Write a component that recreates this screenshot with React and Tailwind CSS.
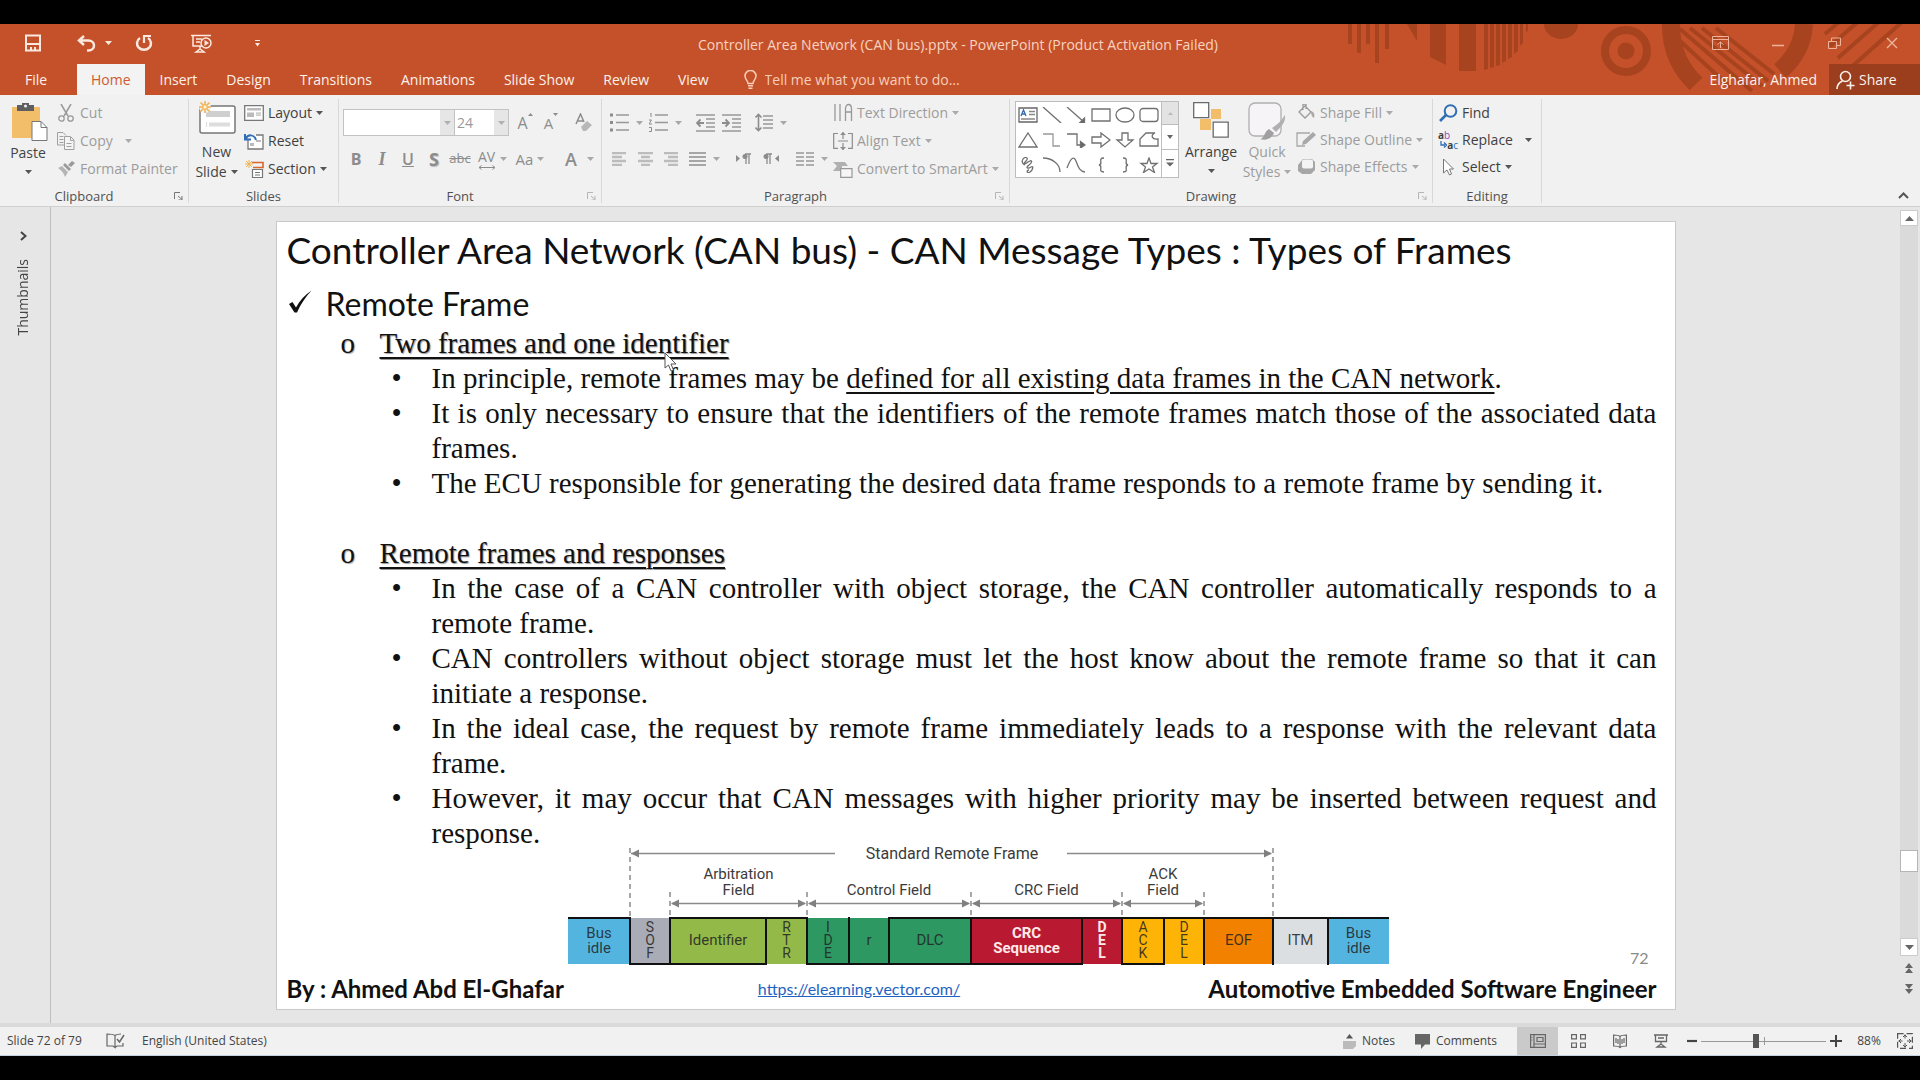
import React from "react";

const Svg = ({ w, h, children, className = "" }) => (
  <svg width={w} height={h} viewBox={`0 0 ${w} ${h}`} fill="none" className={`shrink-0 ${className}`} aria-hidden="true">
    {children}
  </svg>
);

const Caret = ({ className = "text-[#666666]" }) => (
  <Svg w={7} h={4} className={className}>
    <path d="M0 0h7L3.5 4z" fill="currentColor" />
  </Svg>
);

const Divider = () => <span className="h-6 w-px shrink-0 bg-[#d2d2d2]" />;

/* ---------- title bar ---------- */

const HeaderPattern = () => (
  <svg className="pointer-events-none absolute top-0 right-0" width="580" height="71" viewBox="0 0 580 71" fill="none" aria-hidden="true">
    <g fill="#a8431f">
      <path d="M8 0h4v20H8zM17 0h4v29h-4zM26 0h4v20h-4zM35 0h4v39h-4zM45 0h4v25h-4z" />
      <path d="M67 0h10v17zM90 0h16v41l-16-8zM119 0h17v47h-17z" />
      <path d="M144 0h4v45l-4 1zM150 0h4v43l-4 1zM156 0h4v41l-4 1zM162 0h4v37l-4 2zM168 0h4v33l-4 2zM174 0h4v27l-4 3zM180 0h3v19l-3 3zM186 0h2v6l-2 3z" />
      <path d="M204 0h34a17 15 0 0 1-34 0z" />
      <circle cx="286" cy="27" r="8.500" />
    </g>
    <circle cx="286" cy="27" r="21" stroke="#a8431f" strokeWidth="8" />
    <path d="M331 0c0 28 10 45 25 60M464 0c-1 19-9 34-24 47" stroke="#a8431f" strokeWidth="18" />
    <g stroke="#a8431f" strokeWidth="4">
      <path d="M340 5l72 62M350 4l72 58M362 4l66 53M376 4l58 46M340 17l50 46" />
      <path d="M485 10l14-12M490 22l29-25M498 34l42-37M508 46l54-48" />
    </g>
  </svg>
);

const QuickAccess = () => (
  <div className="flex items-center pb-0.5 text-[#fbe9e0]">
    <button aria-label="Save" className="ml-[25px]">
      <Svg w={16} h={18}>
        <path d="M1 1.500h14v15H1z" stroke="currentColor" strokeWidth="2" />
        <path d="M1 9h14v2H1zM5 13h2v3H5zM9 13h2v3H9z" fill="currentColor" />
      </Svg>
    </button>
    <button aria-label="Undo" className="ml-9">
      <Svg w={19} h={17}>
        <path d="M7 1L2 5.500 7 10M2 5.500h9.500c3 0 5.500 2 5.500 5s-2.500 5-5.500 5H10" stroke="currentColor" strokeWidth="2.500" />
      </Svg>
    </button>
    <button aria-label="Undo history" className="ml-[9px]"><Caret className="text-[#fbe9e0]" /></button>
    <button aria-label="Repeat" className="ml-[23px]">
      <Svg w={18} h={18}>
        <path d="M5 4a7 6.500 0 1 0 8 0" stroke="currentColor" strokeWidth="2.500" />
        <path d="M9 9V2h7" stroke="currentColor" strokeWidth="2.200" />
      </Svg>
    </button>
    <button aria-label="Start from beginning" className="ml-[38px]">
      <Svg w={22} h={19}>
        <path d="M0 1.500h20M2 2v10h9M5 5h6M5 8h4M9 12v4M5 18l4-3 4 3z" stroke="currentColor" strokeWidth="1.500" />
        <circle cx="15" cy="9" r="5" stroke="currentColor" strokeWidth="1.500" />
        <path d="M13.500 6l4.500 3-4.500 3z" fill="currentColor" />
      </Svg>
    </button>
    <button aria-label="Customize toolbar" className="ml-[42px]">
      <Svg w={5} h={7}>
        <path d="M0 0h5v1H0zM0 3h5L2.500 6.500z" fill="currentColor" />
      </Svg>
    </button>
  </div>
);

const WindowControls = () => (
  <div className="flex items-center pb-0.5 text-[#eeb49b]">
    <button aria-label="Ribbon display options" className="flex w-[57px] justify-center">
      <Svg w={17} h={14}>
        <path d="M.5.500h16v13H.5zM.5 3.500h16M8.500 12V6M5.500 8.500l3-2.500 3 2.500" stroke="currentColor" />
      </Svg>
    </button>
    <button aria-label="Minimize" className="flex w-[57px] justify-center">
      <Svg w={12} h={14}><path d="M0 9.500h12" stroke="currentColor" strokeWidth="1.500" /></Svg>
    </button>
    <button aria-label="Restore" className="flex w-[57px] justify-center">
      <Svg w={13} h={13}><path d="M.5 4.500h8v7h-8zM3.500 4V1h9v7.500H9" stroke="currentColor" /></Svg>
    </button>
    <button aria-label="Close" className="flex w-[57px] justify-center">
      <Svg w={12} h={12}><path d="M1 1l10 10M11 1L1 11" stroke="currentColor" strokeWidth="1.400" /></Svg>
    </button>
  </div>
);

const TABS = ["Home", "Insert", "Design", "Transitions", "Animations", "Slide Show", "Review", "View"];

const Header = () => (
  <header className="relative bg-[#c4512a] text-sm text-[#fdf1eb]">
    <HeaderPattern />
    <div className="relative grid h-10 grid-cols-[1fr_auto_1fr] items-center">
      <QuickAccess />
      <h1 className="pt-0.5 pr-1 text-[#f8d3c2]">Controller Area Network (CAN bus).pptx - PowerPoint (Product Activation Failed)</h1>
      <div className="flex justify-end"><WindowControls /></div>
    </div>
    <div className="relative flex h-[31px] items-stretch gap-px">
      <button className="w-[76px] pr-2 pl-1 text-center">File</button>
      {TABS.map((t, i) => (
        <button key={t} className={i === 0 ? "bg-[#f3f3f3] px-3.5 text-[#cf5a33]" : "px-3.5"}>{t}</button>
      ))}
      <label className="ml-5 flex grow items-center gap-2 text-[#f8cdb9]">
        <Svg w={13} h={19}>
          <path d="M4 13.500c0-3-3-4-3-7.500a5.500 5.500 0 0 1 11 0c0 3.500-3 4.500-3 7.500z" stroke="currentColor" strokeWidth="1.500" />
          <path d="M4 15h5v1.500H4zM4.500 17.500h4V19h-4z" fill="currentColor" />
        </Svg>
        <input aria-label="Tell me" placeholder="Tell me what you want to do..." className="w-[260px] bg-transparent placeholder:text-[#f8cdb9] placeholder:opacity-100" />
      </label>
      <button className="px-[11px]">Elghafar, Ahmed</button>
      <button className="flex w-[91px] items-center gap-1 bg-[#9a3e1e] pl-[7px]">
        <Svg w={19} h={20}>
          <circle cx="9.500" cy="6.500" r="5" stroke="currentColor" strokeWidth="1.600" />
          <path d="M1 19c0-4 2-6.500 5.500-8M14.500 11.500v8M10.500 15.500h8" stroke="currentColor" strokeWidth="1.600" />
        </Svg>
        Share
      </button>
    </div>
  </header>
);

/* ---------- ribbon ---------- */

const Group = ({ label, launcher, className, children }) => (
  <section aria-label={label} className={`flex shrink-0 flex-col ${className}`}>
    <div className="flex h-[84px]">{children}</div>
    <div className="flex h-5 items-center pt-1.5">
      <span className="grow text-center text-[13px] leading-4 text-[#505050]">{label}</span>
      {launcher && (
        <button aria-label={`${label} settings`} className="flex w-5 items-center justify-center">
          <Svg w={9} h={8} className={launcher}>
            <path d="M.5 7V.5H6" stroke="currentColor" />
            <path d="M4 4l4 3.500M8 4v4H4.500" stroke="currentColor" />
          </Svg>
        </button>
      )}
    </div>
  </section>
);

const GroupEdge = () => <span className="w-px shrink-0 bg-[#d8d8d8]" />;

const Cmd = ({ icon, label, caret, off, wide, tight }) => (
  <button className={`flex items-center gap-1 text-sm whitespace-nowrap ${tight ? "h-[27px]" : "h-7"} ${off ? "text-[#9c9c9c]" : "text-[#3f3f3f]"}`}>
    <span className="flex w-5 justify-center">{icon}</span>
    {label}
    {caret && <Caret className={`${wide ? "ml-2" : "ml-0"} ${off ? "text-[#aaaaaa]" : "text-[#555555]"}`} />}
  </button>
);

const ClipboardGroup = () => (
  <Group label="Clipboard" launcher="text-[#777777]" className="w-[188px]">
    <button className="ml-1.5 flex w-[44px] flex-col items-center pt-1 text-sm leading-5 text-[#444444]">
      <Svg w={36} h={38} className="ml-1">
        <path d="M0 4h28v31H0z" fill="#f2be6a" />
        <path d="M5 2h5V0h7v2h5v6H5z" fill="#5f5f5f" />
        <circle cx="13.500" cy="3" r="1.500" fill="#f1f1f1" />
        <path d="M20 18.500h9l6 6v13H20z" fill="#fff" stroke="#777" />
        <path d="M29 18.500v6h6" stroke="#777" />
      </Svg>
      <span className="pt-0.5">Paste</span>
      <Caret className="mt-[7px] text-[#555555]" />
    </button>
    <div className="ml-1.5 flex flex-col items-start">
      <Cmd off label="Cut" icon={<Svg w={16} h={18}><path d="M3 0l7 12M13 0L6 12" stroke="#999" strokeWidth="1.500" /><circle cx="3.500" cy="14.500" r="2.700" stroke="#999" strokeWidth="1.300" /><circle cx="12.500" cy="14.500" r="2.700" stroke="#999" strokeWidth="1.300" /></Svg>} />
      <Cmd off caret wide label="Copy" icon={<Svg w={18} h={18}><path d="M7 13H.5V.500H6l3 3M2.500 4.500h4M2.500 7.500h4M2.500 10.500h4" stroke="#a0a0a0" /><path d="M7.500 4.500h6l3.500 3.500v9.500H7.500zM13.500 5v3.500h3M9.500 11.500h5M9.500 14.500h5" stroke="#a0a0a0" fill="#f4f4f4" /></Svg>} />
      <Cmd off label="Format Painter" icon={<Svg w={17} h={16}><path d="M0 7l4-2 6 6-3 5c-1-4-4-7-7-9z" fill="#b4b4b4" /><path d="M5 4l2-2 6 6-2 2zM10 4l4-4 3 2-4 4z" fill="#9a9a9a" /></Svg>} />
    </div>
  </Group>
);

const SlidesGroup = () => (
  <Group label="Slides" className="w-[149px]">
    <button className="ml-[5px] flex w-[45px] flex-col items-center pt-0.5 text-sm leading-5 text-[#444444]">
      <Svg w={38} h={33}>
        <rect x="2" y="5" width="35" height="27" rx="2" fill="#fff" stroke="#777" strokeWidth="1.500" />
        <path d="M8 10h24v6H8z" fill="#cfcfcf" />
        <path d="M8 21h1v5H8zM11 21.500h21v4H11z" fill="#ddd" />
        <circle cx="7" cy="6" r="6" fill="#f1f1f1" />
        <path d="M7 0v12M1 6h12M2.500 1.500l9 9M11.500 1.500l-9 9" stroke="#efb04e" strokeWidth="1.500" />
        <circle cx="7" cy="6" r="2.200" fill="#fff3d8" stroke="#efb04e" />
      </Svg>
      <span className="pt-2">New</span>
      <span className="flex items-center gap-1 whitespace-nowrap">Slide<Caret className="text-[#555555]" /></span>
    </button>
    <div className="ml-[5px] flex flex-col items-start">
      <Cmd caret label="Layout" icon={<Svg w={20} h={16}><path d="M.7.700h18.600v14.600H.7z" fill="#fff" stroke="#777" strokeWidth="1.300" /><path d="M3 3h14v2.500H3zM3 7.500h7V12H3zM12 7.500h5v1.200h-5zM12 9.500h5v1.200h-5z" fill="#bbb" /></Svg>} />
      <Cmd label="Reset" icon={<Svg w={20} h={17}><path d="M4 7v9h15V2h-7" stroke="#777" strokeWidth="1.300" fill="#fff" /><path d="M6 10h4v3H6zM12 7h5v2h-5z" fill="#bbb" /><path d="M1 1v5.500h6M1.500 6C4 1 10 1 12 7" stroke="#2f6db5" strokeWidth="2" fill="none" /></Svg>} />
      <Cmd caret label="Section" icon={<Svg w={19} h={18}><path d="M7 2.500h11v5H8" stroke="#d9652f" strokeWidth="1.600" /><path d="M7.500 9.500h10v8h-10zM10 12.500h5M10 15h5" stroke="#777" strokeWidth="1.200" fill="#fff" /><path d="M4 0v8M0 4h8M1 1l6 6M7 1L1 7" stroke="#efb04e" /></Svg>} />
    </div>
  </Group>
);

const T1 = "flex h-6 w-[26px] shrink-0 items-center justify-center text-[#8c8c8c]";

const FontGroup = () => (
  <Group label="Font" launcher="text-[#b5b5b5]" className="w-[262px]">
    <div className="flex flex-col gap-[11px] pt-2.5 pl-1">
      <div className="flex h-[27px] items-center">
        <div className="flex h-full border border-[#c3c3c3] bg-white">
          <input aria-label="Font name" className="w-24 bg-white" />
          <button aria-label="Choose font" className="flex w-3.5 items-center justify-center bg-[#e6e6e6]"><Caret className="text-[#b0b0b0]" /></button>
        </div>
        <div className="flex h-full border border-l-0 border-[#c3c3c3] bg-white">
          <input aria-label="Font size" defaultValue="24" className="w-[39px] bg-white pl-0.5 text-sm text-[#9a9a9a]" />
          <button aria-label="Choose size" className="flex w-3.5 items-center justify-center bg-[#e6e6e6]"><Caret className="text-[#b0b0b0]" /></button>
        </div>
        <button aria-label="Increase font size" className="ml-1 flex w-6 items-start justify-center text-base leading-5 text-[#8c8c8c]">A<Svg w={5} h={3}><path d="M0 3h5L2.500 0z" fill="currentColor" /></Svg></button>
        <button aria-label="Decrease font size" className="ml-0.5 flex w-6 items-start justify-center text-[15px] leading-5 text-[#8c8c8c]">A<Svg w={5} h={3}><path d="M0 0h5L2.500 3z" fill="currentColor" /></Svg></button>
        <span className="ml-0.5"><Divider /></span>
        <button aria-label="Clear formatting" className="ml-2.5 text-[#8c8c8c]">
          <Svg w={18} h={20}>
            <path d="M1 11L5.500 1 9 9M3 8h5" stroke="currentColor" strokeWidth="1.500" />
            <path d="M6 14l6-6 5 4-6 6H8z" fill="#b8b8b8" />
          </Svg>
        </button>
      </div>
      <div className="flex h-6 items-center">
        <button aria-label="Bold" className={`${T1} text-base font-bold`}>B</button>
        <button aria-label="Italic" className={`${T1} font-["Liberation_Serif",serif] text-lg font-bold italic`}>I</button>
        <button aria-label="Underline" className={`${T1} text-base font-semibold underline`}>U</button>
        <button aria-label="Text shadow" className={`${T1} text-lg font-bold text-shadow-[1px_1px_1px_#bbbbbb]`}>S</button>
        <button aria-label="Strikethrough" className={`${T1} text-[13px] line-through`}>abc</button>
        <button aria-label="Character spacing" className="flex w-[38px] items-center justify-center gap-1 text-[#8c8c8c]">
          <span className="flex flex-col items-center text-sm leading-4">AV
            <Svg w={18} h={5}><path d="M1 2.500h16M3.500.500L1 2.500l2.500 2M14.500.500l2.500 2-2.500 2" stroke="currentColor" /></Svg>
          </span>
          <Caret className="text-[#a8a8a8]" />
        </button>
        <button aria-label="Change case" className="flex w-[38px] items-center justify-center gap-1 text-[15px] text-[#8c8c8c]">Aa<Caret className="text-[#a8a8a8]" /></button>
        <span className="ml-1.5"><Divider /></span>
        <button aria-label="Font color" className="ml-2.5 flex items-center gap-2.5 text-lg font-semibold text-[#8c8c8c]">A<Caret className="text-[#a8a8a8]" /></button>
      </div>
    </div>
  </Group>
);

const Lines = ({ rows, w = 18, sw = 1.5, color = "#989898" }) => (
  <g stroke={color} strokeWidth={sw}>
    {rows.map(([a, b], i) => <path key={i} d={`M${a} ${1 + i * 4}H${b ?? w}`} />)}
  </g>
);

const PG = "flex shrink-0 items-center gap-[7px]";

const ParagraphGroup = () => (
  <Group label="Paragraph" launcher="text-[#b5b5b5]" className="w-[407px]">
    <div className="flex w-[222px] flex-col gap-[11px] pt-2.5 pl-2">
      <div className="flex h-[27px] items-center">
        <button aria-label="Bullets" className={PG}>
          <Svg w={19} h={19}><path d="M6 2h13M6 9.500h13M6 17h13" stroke="#989898" strokeWidth="1.500" /><path d="M0 .5h3v3H0zM0 8h3v3H0zM0 15.500h3v3H0z" fill="#8c8c8c" /></Svg>
          <Caret className="text-[#a8a8a8]" />
        </button>
        <button aria-label="Numbering" className={`${PG} ml-1.5`}>
          <Svg w={19} h={19}><path d="M6 2h13M6 9.500h13M6 17h13" stroke="#989898" strokeWidth="1.500" /><path d="M1 0h1v4M0 7h2.500L0 11h3M0 14.500h2.500v4H0" stroke="#8c8c8c" /></Svg>
          <Caret className="text-[#a8a8a8]" />
        </button>
        <span className="ml-2"><Divider /></span>
        <button aria-label="Decrease indent" className="ml-1.5">
          <Svg w={19} h={18}><path d="M0 1h19M10 5h9M10 9h9M10 13h9M0 17h19" stroke="#989898" strokeWidth="1.500" /><path d="M8 9H1M4.500 5.500L1 9l3.500 3.500" stroke="#8c8c8c" strokeWidth="1.800" /></Svg>
        </button>
        <button aria-label="Increase indent" className="ml-[7px]">
          <Svg w={19} h={18}><path d="M0 1h19M10 5h9M10 9h9M10 13h9M0 17h19" stroke="#989898" strokeWidth="1.500" /><path d="M0 9h7M3.500 5.500L7 9l-3.500 3.500" stroke="#8c8c8c" strokeWidth="1.800" /></Svg>
        </button>
        <span className="ml-[7px]"><Divider /></span>
        <button aria-label="Line spacing" className={`${PG} ml-[7px]`}>
          <Svg w={18} h={19}><path d="M8 3h10M8 7h10M8 11h10M8 15h10" stroke="#989898" strokeWidth="1.500" /><path d="M3.500 1v17M.5 4.500l3-3 3 3M.5 14.500l3 3 3-3" stroke="#8c8c8c" strokeWidth="1.600" /></Svg>
          <Caret className="text-[#a8a8a8]" />
        </button>
      </div>
      <div className="flex h-6 items-center">
        <button aria-label="Align left" className="ml-0.5"><Svg w={15} h={14}><Lines color="#bcbcbc" sw={2.500} w={14} rows={[[0, 14], [0, 10], [0, 14], [0, 10]]} /></Svg></button>
        <button aria-label="Center" className="ml-[11px]"><Svg w={15} h={14}><Lines color="#bcbcbc" sw={2.500} rows={[[0, 15], [3, 12], [0, 15], [3, 12]]} /></Svg></button>
        <button aria-label="Align right" className="ml-[11px]"><Svg w={15} h={14}><Lines color="#bcbcbc" sw={2.500} rows={[[0, 14], [4, 14], [0, 14], [4, 14]]} /></Svg></button>
        <button aria-label="Justify" className={`${PG} ml-2.5`}>
          <Svg w={17} h={14}><Lines color="#8c8c8c" rows={[[0, 17], [0, 17], [0, 17], [0, 17]]} /></Svg>
          <Caret className="text-[#a8a8a8]" />
        </button>
        <span className="ml-[7px]"><Divider /></span>
        <button aria-label="Left to right" className="ml-[9px]"><Svg w={16} h={12}><path d="M0 2l4 3.500L0 9z" fill="#8c8c8c" /><path d="M10 1v10M13 1v10M15 1H9" stroke="#8c8c8c" strokeWidth="1.300" /><circle cx="9" cy="3.500" r="2.500" fill="#8c8c8c" /></Svg></button>
        <button aria-label="Right to left" className="ml-[11px]"><Svg w={16} h={12}><path d="M16 2l-4 3.500L16 9z" fill="#8c8c8c" /><path d="M4 1v10M7 1v10M9 1H3" stroke="#8c8c8c" strokeWidth="1.300" /><circle cx="3" cy="3.500" r="2.500" fill="#8c8c8c" /></Svg></button>
        <span className="ml-[9px]"><Divider /></span>
        <button aria-label="Columns" className={`${PG} ml-2`}>
          <Svg w={18} h={14}><path d="M0 1h8M0 5h8M0 9h8M0 13h8M10 1h8M10 5h8M10 9h8M10 13h8" stroke="#989898" strokeWidth="1.500" /></Svg>
          <Caret className="text-[#a8a8a8]" />
        </button>
      </div>
    </div>
    <div className="ml-[9px] flex flex-col items-start">
      <Cmd off caret label="Text Direction" icon={<Svg w={19} h={20}><path d="M1 1v17M6 1v17M11.500 18V6c0-6 6-6 6 0v12M11.500 9h6" stroke="#989898" strokeWidth="1.300" /></Svg>} />
      <Cmd off caret label="Align Text" icon={<Svg w={20} h={18}><path d="M5 1.500H.7v14.800H5M15 1.500h4.300v14.800H15M5 9h10M10 0v7M10 11v7" stroke="#8c8c8c" strokeWidth="1.200" /><path d="M7 3h6l-3-3zM7 15h6l-3 3z" fill="#8c8c8c" /></Svg>} />
      <Cmd off caret label="Convert to SmartArt" icon={<Svg w={20} h={17}><path d="M0 1h12l3 4H9v5H0l4-5z" fill="#b0b0b0" /><path d="M7.700 7.700H19v8.600H7.700z" fill="#f6f6f6" stroke="#999" strokeWidth="1.200" /></Svg>} />
    </div>
  </Group>
);

const SHAPES = [
  ["text", <g key="g"><path d="M1 1h18v14H1z" fill="#fff" stroke="#666" strokeWidth="1.300" /><path d="M11 4.500h6M11 7.500h6M3 12h14" stroke="#888" /><path d="M3 9l2.500-6L8 9M4 7h3" stroke="#2f6db5" strokeWidth="1.300" /></g>],
  ["line", <path key="p" d="M1 0l18 16" />],
  ["arrow", <g key="g"><path d="M1 0l17 15" /><path d="M18.500 11v5h-5z" fill="#666" /></g>],
  ["rectangle", <path key="p" d="M1 2h18v12H1z" />],
  ["ellipse", <ellipse key="e" cx="10" cy="8" rx="9" ry="7" />],
  ["rounded rectangle", <rect key="r" x="1" y="1.500" width="18" height="13" rx="3" />],
  ["triangle", <path key="p" d="M10 1l9 14H1z" />],
  ["elbow", <path key="p" d="M1 2h10v12h7" stroke="#999" />],
  ["elbow arrow", <g key="g"><path d="M1 2h10v11h5" /><path d="M14.500 9.500l4.500 3.500-4.500 3z" fill="#666" /></g>],
  ["right arrow", <path key="p" d="M1 5h9V1l9 7-9 7v-4H1z" />],
  ["down arrow", <path key="p" d="M7 1h6v7h5l-8 7-8-7h5z" />],
  ["freeform", <path key="p" d="M1 14V7l6-6h9c-5 2-3 7 3 6v7z" />],
  ["scribble", <path key="p" d="M5 2c3-3 6-1 3 2s-2 4 2 1 5 0 1 3-1 4 2 2 2 3-1 5-4-2-1-2M5 2c-2 3 0 5 2 6" />],
  ["arc", <path key="p" d="M1 1c9 0 17 6 17 14" />],
  ["curve", <path key="p" d="M1 11C5 0 8-1 10 4s3 10 9 11" />],
  ["left brace", <path key="p" d="M13 1c-7 0 0 6-5 7 5 1-2 7 5 7" />],
  ["right brace", <path key="p" d="M8 1c7 0 0 6 5 7-5 1 2 7-5 7" />],
  ["star", <path key="p" d="M10 1l2 5.500h6L13.500 10l2 5.500L10 12l-5.500 3.500 2-5.500L2 6.500h6z" />],
];

const DrawingGroup = () => (
  <Group label="Drawing" launcher="text-[#b5b5b5]" className="w-[422px]">
    <div className="mt-0.5 ml-[5px] flex h-[77px] w-[164px] border border-[#bdbdbd] bg-white">
      <div className="grid grow grid-cols-6 items-center justify-items-center">
        {SHAPES.map(([n, s]) => (
          <button key={n} aria-label={n}>
            <Svg w={20} h={16}><g stroke="#707070" strokeWidth="1.300">{s}</g></Svg>
          </button>
        ))}
      </div>
      <div className="flex w-[17px] flex-col divide-y divide-[#bdbdbd] border-l border-[#bdbdbd]">
        <button aria-label="Previous shapes" className="flex grow items-center justify-center bg-[#e3e3e3]"><Svg w={5} h={3}><path d="M0 3h5L2.500 0z" fill="#bbb" /></Svg></button>
        <button aria-label="Next shapes" className="flex grow items-center justify-center"><Svg w={6} h={4}><path d="M0 0h6L3 4z" fill="#666" /></Svg></button>
        <button aria-label="All shapes" className="flex grow items-center justify-center"><Svg w={8} h={8}><path d="M0 0h8v1.300H0zM0 3.500h8L4 7.500z" fill="#666" /></Svg></button>
      </div>
    </div>
    <button className="ml-1 flex w-[56px] flex-col items-center pt-[3px] text-sm leading-5 text-[#3f3f3f]">
      <Svg w={36} h={36}>
        <path d="M18 7h10v10H18zM7 17h11v11H7z" fill="#f2be6a" />
        <path d="M.7.700h15v15h-15zM20.200 20.200h15v15h-15z" fill="#fff" stroke="#6a6a6a" strokeWidth="1.300" />
      </Svg>
      <span className="pt-1">Arrange</span>
      <Caret className="mt-[7px] text-[#555555]" />
    </button>
    <button className="ml-0.5 flex w-[52px] flex-col items-center pt-[3px] text-sm leading-5 text-[#9c9c9c]">
      <Svg w={38} h={38}>
        <rect x="1" y="1" width="32" height="33" rx="6" fill="#f7f4f7" stroke="#b0b0b0" strokeWidth="1.300" />
        <path d="M37 13c1 7-4 12-9 17l-4-4c5-3 9-7 13-13z" fill="#b0b0b0" />
        <path d="M12 37c4 0 4-7 9-10l5 4c-2 5-8 8-14 6z" fill="#a0a0a0" />
      </Svg>
      <span className="pt-0.5">Quick</span>
      <span className="flex items-center gap-1 whitespace-nowrap">Styles<Caret className="text-[#aaaaaa]" /></span>
    </button>
    <div className="ml-[3px] flex flex-col items-start">
      <Cmd off tight caret label="Shape Fill" icon={<Svg w={18} h={17}><path d="M2 8l6-6 6 6-6 6zM6 6V0h3v5" stroke="#999" strokeWidth="1.300" /><path d="M14 7c3 1 4 3 3 7-2-1-3-3-3-7z" fill="#aaa" /></Svg>} />
      <Cmd off tight caret label="Shape Outline" icon={<Svg w={20} h={16}><path d="M14 1H1v13h8" stroke="#a8a8a8" strokeWidth="1.300" /><path d="M6 13l1-4L17 0l3 3-10 9z" fill="#a8a8a8" /></Svg>} />
      <Cmd off tight caret label="Shape Effects" icon={<Svg w={17} h={17}><path d="M5 1h9l3 3v8l-4 4H4l-4-3V7z" fill="#a6a6a6" /><rect x="4" y="1.500" width="11" height="9" rx="2" fill="#f4f4f4" /></Svg>} />
    </div>
  </Group>
);

const EditingGroup = () => (
  <Group label="Editing" className="w-[108px]">
    <div className="ml-[5px] flex flex-col items-start">
      <Cmd tight label="Find" icon={<Svg w={19} h={18}><circle cx="11.500" cy="7" r="5.800" stroke="#2f6db5" strokeWidth="2" /><path d="M7 11l-6 6" stroke="#2f6db5" strokeWidth="2.600" /></Svg>} />
      <Cmd tight caret wide label="Replace" icon={
        <span className="flex w-5 flex-col text-[10px] leading-[10px] font-bold">
          <span className="text-left">a<span className="font-normal text-[#8a4bb5]">b</span></span>
          <span className="flex items-center justify-end"><Svg w={7} h={7}><path d="M1 0v4h4M4 1.500L6.500 4 4 6.500" stroke="#2f6db5" strokeWidth="1.300" /></Svg>a<span className="font-normal text-[#2f6db5]">c</span></span>
        </span>} />
      <Cmd tight caret label="Select" icon={<Svg w={12} h={18}><path d="M1.500 1v14l3.500-3 2.500 5 2-1-2-5h4z" fill="#fff" stroke="#777" /></Svg>} />
    </div>
  </Group>
);

const Ribbon = () => (
  <div role="toolbar" aria-label="Home" className="flex border-b border-[#d0d0d0] bg-[#f1f1f1] pt-1 pb-[3px]">
    <ClipboardGroup /><GroupEdge />
    <SlidesGroup /><GroupEdge />
    <FontGroup /><GroupEdge />
    <ParagraphGroup /><GroupEdge />
    <DrawingGroup /><GroupEdge />
    <EditingGroup /><GroupEdge />
    <button aria-label="Collapse ribbon" className="mt-auto mr-[11px] mb-1 ml-auto">
      <Svg w={11} h={7}><path d="M1 6l4.500-4.500L10 6" stroke="#555" strokeWidth="2" /></Svg>
    </button>
  </div>
);

/* ---------- slide ---------- */

const CELLS = [
  { x: 1, e: 63, c: "#53b5df", t: ["Bus", "idle"], top: true },
  { x: 63, e: 103, c: "#a9acb6", t: ["S", "O", "F"], bottom: true },
  { x: 103, e: 199, c: "#93b948", t: ["Identifier"], top: true, bottom: true },
  { x: 199, e: 240, c: "#93b948", t: ["R", "T", "R"], top: true },
  { x: 240, e: 282, c: "#2d9862", t: ["I", "D", "E"], bottom: true },
  { x: 282, e: 322, c: "#2d9862", t: ["r"], bottom: true },
  { x: 322, e: 404, c: "#2d9862", t: ["DLC"], top: true, bottom: true },
  { x: 404, e: 515, c: "#ba1a31", t: ["CRC", "Sequence"], top: true, bottom: true, light: true },
  { x: 515, e: 555, c: "#ba1a31", t: ["D", "E", "L"], top: true, light: true },
  { x: 555, e: 597, c: "#fdb406", t: ["A", "C", "K"], top: true, bottom: true },
  { x: 597, e: 637, c: "#fdb406", t: ["D", "E", "L"], top: true },
  { x: 637, e: 706, c: "#f28100", t: ["EOF"], top: true },
  { x: 706, e: 761, c: "#dcdfe2", t: ["ITM"], top: true },
  { x: 761, e: 822, c: "#53b5df", t: ["Bus", "idle"], top: true },
];

const FIELDS = [
  { x: 103, e: 240, t: ["Arbitration", "Field"] },
  { x: 240, e: 404, t: ["Control Field"] },
  { x: 404, e: 555, t: ["CRC Field"] },
  { x: 555, e: 637, t: ["ACK", "Field"] },
];

const FrameDiagram = () => (
  <svg width="824" height="122" viewBox="0 0 824 122" className='shrink-0 font-["Roboto",sans-serif]' role="img" aria-label="Standard Remote Frame" textAnchor="middle">
    <g stroke="#8a8a8a" strokeWidth="1.500">
      <path d="M64 9.500h204M500 9.500h204" />
      <path d="M63 4v68M706 4v68M103 48v24M240 48v24M404 48v24M555 48v24M637 48v24" strokeDasharray="5 4" />
      {FIELDS.map((f) => <path key={f.x} d={`M${f.x + 2} 59.500H${f.e - 2}`} />)}
    </g>
    <g fill="#808080">
      <path d="M64 9.500l8-4v8zM705 9.500l-8-4v8z" />
      {FIELDS.map((f) => <path key={f.x} d={`M${f.x + 1} 59.500l8-4v8zM${f.e - 1} 59.500l-8-4v8z`} />)}
    </g>
    <g fill="#3b3b3b">
      <text x="385" y="15" fontSize="16">Standard Remote Frame</text>
      {FIELDS.map((f) => f.t.map((t, i) => (
        <text key={t + f.x} x={(f.x + f.e) / 2} y={51 - (f.t.length - 1 - i) * 16} fontSize="15">{t}</text>
      )))}
    </g>
    {CELLS.map((c) => {
      const gap = c.t.length === 3 ? 13 : 15;
      return (
        <g key={c.x}>
          <rect x={c.x} y={c.top ? 73 : 74} width={c.e - c.x} height="47" fill={c.c} />
          {c.top && <path d={`M${c.x} 74H${c.e}`} stroke="#111" strokeWidth="2" />}
          {c.bottom && <path d={`M${c.x} 120H${c.e}`} stroke="#111" strokeWidth="2" />}
          {c.t.map((t, i) => (
            <text key={i} x={(c.x + c.e) / 2} y={101 + (i - (c.t.length - 1) / 2) * gap} fontSize={c.t.length === 3 ? 14 : 15} fontWeight={c.light ? 700 : 400} fill={c.light ? "#ffe9e9" : "#222"} fillOpacity={c.light ? 1 : 0.85}>{t}</text>
          ))}
        </g>
      );
    })}
    <path d="M63 73v48M103 73v48M199 73v48M240 73v48M282 73v48M322 73v48M404 73v48M515 73v48M555 73v48M597 73v48M637 73v48M706 73v48M761 73v48" stroke="#111" strokeWidth="2" />
  </svg>
);

const Topic = ({ title, children, className = "" }) => (
  <li className={className}>
    <div className="flex pl-[54px]">
      <span className="w-[39px] text-shadow-[1px_1px_1px_#aaaaaa]">o</span>
      <h4 className="relative underline decoration-2 underline-offset-4 text-shadow-[1px_1px_1px_#999999]">{title}</h4>
    </div>
    <ul className="pl-[105px]">{children}</ul>
  </li>
);

const Point = ({ children }) => (
  <li className="flex">
    <span className="w-10 shrink-0">•</span>
    <p className="grow text-justify">{children}</p>
  </li>
);

const Slide = () => (
  <article className='flex w-full max-w-[1400px] flex-col border border-[#c9c9c9] bg-white pt-2 pr-[18px] pb-1 pl-2.5 font-["Lato",sans-serif] text-[#111111]'>
    <h2 className="text-[37px] leading-10">Controller Area Network (CAN bus) - CAN Message Types : Types of Frames</h2>
    <h3 className="mt-3.5 flex items-center text-[32px] leading-10">
      <Svg w={26} h={25} className="mr-[13px] mb-1">
        <path d="M2 15l3.500-2 3.500 5.500C12.500 12 17.500 6 24.500 1.500 18.500 8 13.500 15.500 10 23.500H7.500z" fill="#111" />
      </Svg>
      Remote Frame
    </h3>
    <ul className='mt-0.5 font-["Liberation_Serif",serif] text-[29px] leading-[35px]'>
      <Topic title={<>Two frames and one identifier
        <svg className="absolute top-[26px] left-[284px]" width="13" height="21" viewBox="0 0 13 21" aria-hidden="true">
          <path d="M1 1v15l3.500-3 2.500 6 2.500-1-2.500-6h5z" fill="#fff" stroke="#555" />
        </svg></>}>
        <Point>In principle, remote frames may be <u className="decoration-2 underline-offset-4">defined for all existing data frames in the CAN network</u>.</Point>
        <Point>It is only necessary to ensure that the identifiers of the remote frames match those of the associated data frames.</Point>
        <Point>The ECU responsible for generating the desired data frame responds to a remote frame by sending it.</Point>
      </Topic>
      <Topic title="Remote frames and responses" className="mt-[35px]">
        <Point>In the case of a CAN controller with object storage, the CAN controller automatically responds to a remote frame.</Point>
        <Point>CAN controllers without object storage must let the host know about the remote frame so that it can initiate a response.</Point>
        <Point>In the ideal case, the request by remote frame immediately leads to a response with the relevant data frame.</Point>
        <Point>However, it may occur that CAN messages with higher priority may be inserted between request and response.</Point>
      </Topic>
    </ul>
    <div className="-mt-[7px] flex items-end">
      <div className="ml-[280px]"><FrameDiagram /></div>
      <span className="mr-2 ml-auto text-base leading-4 text-[#8a8a8a]">72</span>
    </div>
    <footer className="mt-[7px] flex items-center text-2xl leading-8 font-bold">
      <span>By : Ahmed Abd El-Ghafar</span>
      <a href="https://elearning.vector.com/" className="mr-auto ml-[194px] text-base leading-5 font-normal text-[#1f63c0] underline">https://elearning.vector.com/</a>
      <span>Automotive Embedded Software Engineer</span>
    </footer>
  </article>
);

/* ---------- workspace and status bar ---------- */

const Scrollbar = () => (
  <div className="mr-0.5 flex w-[18px] shrink-0 flex-col items-stretch pt-[3px] pb-6 text-[#666666]">
    <button aria-label="Scroll up" className="flex h-4 items-center justify-center border border-[#cccccc] bg-white"><Svg w={9} h={5}><path d="M0 5h9L4.500 0z" fill="currentColor" /></Svg></button>
    <div className="flex grow flex-col bg-[#dadada]">
      <div className="grow-[623]" />
      <div className="h-[22px] border border-[#b5b5b5] bg-white" />
      <div className="grow-[66]" />
    </div>
    <button aria-label="Scroll down" className="flex h-[18px] items-center justify-center border border-[#cccccc] bg-white"><Svg w={9} h={5}><path d="M0 0h9L4.500 5z" fill="currentColor" /></Svg></button>
    <button aria-label="Previous slide" className="flex h-[23px] items-center justify-center"><Svg w={10} h={10}><path d="M1 5h8L5 0zM1 10h8L5 5z" fill="currentColor" /></Svg></button>
    <button aria-label="Next slide" className="flex h-5 items-center justify-center"><Svg w={10} h={10}><path d="M1 0h8L5 5zM1 5h8l-4 5z" fill="currentColor" /></Svg></button>
  </div>
);

const Workspace = () => (
  <main className="flex grow bg-[#e6e6e6]">
    <aside className="flex w-[51px] shrink-0 flex-col items-center border-r border-[#bebebe] pt-6 pr-1">
      <button aria-label="Expand thumbnails"><Svg w={7} h={10}><path d="M1 1l4.500 4L1 9" stroke="#444" strokeWidth="2" /></Svg></button>
      <span className="mt-[18px] rotate-180 text-sm text-[#444444] [writing-mode:vertical-rl]">Thumbnails</span>
    </aside>
    <div className="flex min-w-0 grow items-center justify-center"><Slide /></div>
    <Scrollbar />
  </main>
);

const StatusBar = () => (
  <footer className="flex h-[33px] items-center border-t-4 border-b border-t-[#dadada] border-b-[#c3d2e0] bg-[#f1f1f1] text-xs text-[#444444]">
    <span className="ml-[7px] w-[99px]">Slide 72 of 79</span>
    <button aria-label="Spelling">
      <Svg w={19} h={16}>
        <path d="M9 2.500C7 1 4 1 1 1v12h6l2 1.500V2.500C11 1 13 1 15 1M9 14.500l2-1.500h6v-3" stroke="#666" strokeWidth="1.200" />
        <path d="M11 6l2.500 3L18 2" stroke="#666" strokeWidth="1.500" />
      </Svg>
    </button>
    <button className="ml-[17px]">English (United States)</button>
    <button className="ml-auto flex items-center gap-1.5">
      <Svg w={13} h={15}><path d="M3 4.500h7L6.500 0z" fill="#555" /><path d="M0 7h13v5l-3 3H0z" fill="#bbb" /></Svg>
      Notes
    </button>
    <button className="ml-5 flex items-center gap-1.5">
      <Svg w={15} h={15}><path d="M0 0h15v10.500H10L6 15v-4.500H0z" fill="#666" /></Svg>
      Comments
    </button>
    <button aria-label="Normal view" className="ml-5 flex w-[41px] items-center justify-center self-stretch bg-[#cacaca]">
      <Svg w={16} h={14}><path d="M.6.600h14.800v12.800H.6zM4 1v12M4 10h11M7 3.500h6v4H7zM1.500 3.500h1M1.500 6h1" stroke="#666" strokeWidth="1.200" /></Svg>
    </button>
    <button aria-label="Slide sorter" className="flex w-[41px] justify-center">
      <Svg w={15} h={14}><path d="M.6.600h4.800v4.300H.6zM9.600.600h4.800v4.300H9.600zM.6 9h4.800v4.300H.6zM9.600 9h4.800v4.300H9.600z" stroke="#666" strokeWidth="1.200" /></Svg>
    </button>
    <button aria-label="Reading view" className="flex w-[41px] justify-center">
      <Svg w={14} h={15}><path d="M7 2.500C5.500 1 3 1 .6 1v11c2.400 0 5 0 6.400 1.500C8.500 12 11 12 13.400 12V1C11 1 8.500 1 7 2.500zM7 2.500v11M3 4v5M11 4v5M5 5v5M9 5v5" stroke="#666" strokeWidth="1.200" /></Svg>
    </button>
    <button aria-label="Slide show" className="flex w-[41px] justify-center">
      <Svg w={14} h={14}><path d="M0 1h14M1.500 1v6.500h11V1M4 4h6M7 8v3M3 13l4-3 4 3z" stroke="#666" strokeWidth="1.300" /></Svg>
    </button>
    <button aria-label="Zoom out" className="ml-1.5"><Svg w={10} h={10}><path d="M0 5h10" stroke="#444" strokeWidth="2.200" /></Svg></button>
    <div className="relative ml-1 flex w-[125px] items-center">
      <span className="absolute left-1/2 h-2 w-px bg-[#999999]" />
      <input type="range" aria-label="Zoom level" min="0" max="100" defaultValue="44" className="h-4 w-full appearance-none bg-transparent [&::-webkit-slider-runnable-track]:h-px [&::-webkit-slider-runnable-track]:bg-[#999999] [&::-webkit-slider-thumb]:-mt-[7px] [&::-webkit-slider-thumb]:h-3.5 [&::-webkit-slider-thumb]:w-1.5 [&::-webkit-slider-thumb]:appearance-none [&::-webkit-slider-thumb]:bg-[#555555]" />
    </div>
    <button aria-label="Zoom in" className="ml-1"><Svg w={12} h={12}><path d="M0 6h12M6 0v12" stroke="#444" strokeWidth="2" /></Svg></button>
    <button className="ml-[15px] w-6">88%</button>
    <button aria-label="Fit slide to window" className="mr-[7px] ml-4">
      <Svg w={16} h={16}><path d="M.6.600h14.800v14.800H.6z" stroke="#555" strokeWidth="1.200" strokeDasharray="6 3" /><path d="M8 1.500v4M8 10v4.500M1.500 8h4M10 8h4.500M6 4l2-2 2 2M6 12l2 2 2-2M4 6L2 8l2 2M12 6l2 2-2 2" stroke="#555" /></Svg>
    </button>
  </footer>
);

export default function App() {
  return (
    <div className='flex min-h-screen flex-col border-y-[24px] border-black bg-black font-["Open_Sans",sans-serif]'>
      <Header />
      <Ribbon />
      <Workspace />
      <StatusBar />
    </div>
  );
}
